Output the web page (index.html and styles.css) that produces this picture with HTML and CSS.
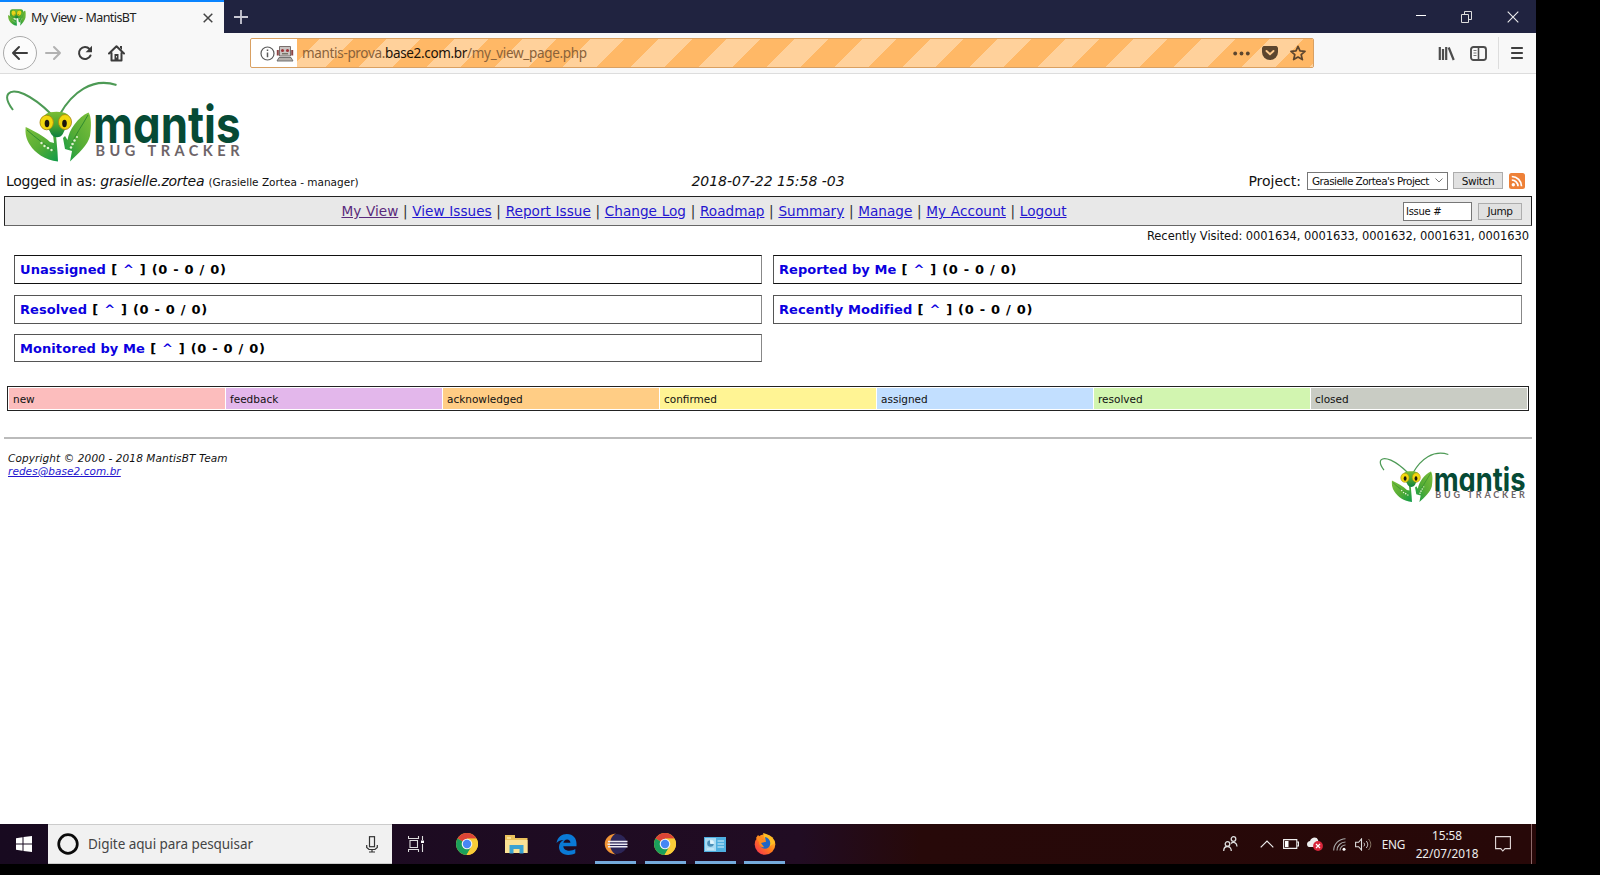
FILE: index.html
```html
<!DOCTYPE html>
<html lang="en">
<head>
<meta charset="utf-8">
<title>My View - MantisBT</title>
<link rel="stylesheet" href="styles.css">
</head>
<body>
<svg class="defs" width="0" height="0">
  <defs>
    <linearGradient id="leaf" x1="0" y1="0" x2="1" y2="1"><stop offset="0" stop-color="#7cc03c"/><stop offset=".5" stop-color="#57ad35"/><stop offset="1" stop-color="#0e9a48"/></linearGradient>
    <linearGradient id="leaf2" x1="1" y1="0" x2="0" y2="1"><stop offset="0" stop-color="#7cc03c"/><stop offset=".5" stop-color="#57ad35"/><stop offset="1" stop-color="#0e9a48"/></linearGradient>
    <linearGradient id="face" x1="0" y1="0" x2="0" y2="1"><stop offset="0" stop-color="#7bbd35"/><stop offset=".5" stop-color="#4ba62f"/><stop offset="1" stop-color="#0c7f40"/></linearGradient>
    <linearGradient id="fox" x1="0" y1="1" x2="1" y2="0"><stop offset="0" stop-color="#f5265a"/><stop offset=".5" stop-color="#ff7a1a"/><stop offset="1" stop-color="#ffd92e"/></linearGradient>
    <symbol id="insect" viewBox="25 108 67 54">
      <path d="M25.700 127C34 131 44 136 50 142l4 1-1-8h3l1.500 17L58 161.500C45 160 35 153 30 145c-4-6-5-12-4.300-18z" fill="url(#leaf)"/>
      <path d="M88.500 112.500c3 4 3 14 1.500 23.500-2 9-12 18-20 25.500l2-10.500-7-2-2-11 2-2 2.500 4C69 130 78 117 88.500 112.500z" fill="url(#leaf2)"/>
      <path d="M27 130c9 8 18 15 28 21M88 115c-6 11-13 20-17 30" fill="none" stroke="#2f8a2e" stroke-width="1"/>
      <path d="M46 114c4-3 17-3 21 0 4 4 4 10 0 14-3 1-3 5-5 7-2 3-8 3-10 0-2-2-2-6-6-7-5-4-4-10 0-14z" fill="url(#face)"/>
      <ellipse cx="46.700" cy="122.500" rx="6.700" ry="7.300" fill="#f1d80f" stroke="#a98a12" stroke-width=".9"/>
      <ellipse cx="65" cy="122" rx="6.500" ry="7.500" fill="#f1d80f" stroke="#a98a12" stroke-width=".9"/>
      <ellipse cx="47" cy="123.500" rx="2.300" ry="3.700" fill="#1b160c"/><ellipse cx="64.500" cy="123.500" rx="2.300" ry="3.700" fill="#1b160c"/>
      <g fill="#e3f3d2"><circle cx="41.500" cy="143" r="1.200"/><circle cx="44.500" cy="146" r="1.200"/><circle cx="48" cy="148" r="1.300"/><circle cx="51.500" cy="150" r="1.200"/><circle cx="77" cy="137" r="1"/><circle cx="74.500" cy="140.500" r="1.200"/><circle cx="72.500" cy="144" r="1.300"/><circle cx="71" cy="147.500" r="1.200"/></g>
    </symbol>
    <symbol id="logo" viewBox="6 81 236 82">
      <path d="M13 110C1 94 9 88 24 94c11 5 19 12 27 20" fill="none" stroke="#4d9a55" stroke-width="2"/>
      <path d="M60 114C72 93 92 77 116.500 85" fill="none" stroke="#4d9a55" stroke-width="2"/>
      <use href="#insect" x="25" y="108" width="67" height="54"/>
      <text class="word" x="93" y="143" textLength="147.500" lengthAdjust="spacingAndGlyphs">mantis</text>
      <text class="tag" x="95.500" y="155.500" textLength="144" lengthAdjust="spacing">BUG TRACKER</text>
    </symbol>
    <symbol id="chrome" viewBox="0 0 22 22">
      <circle cx="11" cy="11" r="11" fill="#efc22d"/>
      <path d="M11 11L1.500 5.500A11 11 0 0 1 20.500 5.500H11z" fill="#dc4437"/>
      <path d="M1.500 5.500A11 11 0 0 0 10.500 22L15.500 13.500 11 11z" fill="#1a9f5b"/>
      <path d="M11 5.700h9.600A11 11 0 0 1 10.500 22l5.200-8.700z" fill="#f9cc38"/>
      <circle cx="11" cy="11" r="5.300" fill="#f3f3f3"/><circle cx="11" cy="11" r="4.200" fill="#4687f4"/>
    </symbol>
  </defs>
</svg>

<div class="screen">
  <header class="titlebar">
    <div class="tab">
      <svg class="favicon" width="18" height="17" viewBox="25 108 67 54" preserveAspectRatio="none"><rect x="32" y="109" width="50" height="28" rx="8" fill="#4ba62f"/><use href="#insect" x="25" y="108" width="67" height="54"/><circle cx="45" cy="120" r="7" fill="#e6d51a"/><circle cx="68" cy="120" r="7" fill="#e6d51a"/></svg>
      <span class="tab-title">My View - MantisBT</span>
      <svg width="10" height="10" viewBox="0 0 10 10"><path d="M.7.7l8.600 8.600M9.300.7L.7 9.300" stroke="#444" stroke-width="1.500"/></svg>
    </div>
    <svg class="newtab" width="14" height="14" viewBox="0 0 14 14"><path d="M7 0v14M0 7h14" stroke="#c9c9d4" stroke-width="1.800"/></svg>
    <div class="window-buttons">
      <svg width="10" height="12" viewBox="0 0 10 12"><path d="M0 4.500h10" stroke="#fff"/></svg>
      <svg width="11" height="12" viewBox="0 0 11 12"><path d="M.5 3.500h7v8h-7zM3.500 3.500v-3h7v8h-3" fill="none" stroke="#ddd"/></svg>
      <svg width="12" height="12" viewBox="0 0 12 12"><path d="M.7.7l10.600 10.600M11.300.7L.7 11.300" stroke="#eee" stroke-width="1.100"/></svg>
    </div>
  </header>

  <nav class="toolbar">
    <span class="back"><svg width="18" height="16" viewBox="0 0 18 16"><path d="M16 8H2M8 2L2 8l6 6" fill="none" stroke="#3c3c3c" stroke-width="2" stroke-linecap="round" stroke-linejoin="round"/></svg></span>
    <svg class="fwd" width="18" height="16" viewBox="0 0 18 16"><path d="M2 8h14M10 2l6 6-6 6" fill="none" stroke="#b2b2b2" stroke-width="2" stroke-linecap="round" stroke-linejoin="round"/></svg>
    <svg class="reload" width="16" height="16" viewBox="0 0 16 16"><path d="M13.500 10.500A6 6 0 1 1 12.500 4" fill="none" stroke="#3c3c3c" stroke-width="2" stroke-linecap="round"/><path d="M15 .8v6.400H8.600z" fill="#3c3c3c"/></svg>
    <svg class="home" width="17" height="17" viewBox="0 0 17 17"><path d="M1 8.500L8.500 1.200 16 8.500M3.500 8v7.500h10V8" fill="none" stroke="#3c3c3c" stroke-width="2" stroke-linecap="round" stroke-linejoin="round"/><path d="M6.500 9h4v7h-4zM12 1h2v4l-2-2z" fill="#3c3c3c"/><path d="M8 11h1v1.500H8z" fill="#ddd"/></svg>
    <div class="urlbar">
      <div class="identity">
        <svg width="15" height="15" viewBox="0 0 15 15"><circle cx="7.500" cy="7.500" r="6.500" fill="none" stroke="#5c5c5c" stroke-width="1.200"/><path d="M7.500 6.500v4.800M7.500 3.500v1.600" stroke="#5c5c5c" stroke-width="1.500"/></svg>
        <svg width="18" height="17" viewBox="0 0 18 17"><path d="M3.500 1.500h11V11h-11z" fill="#c9c3c1" stroke="#6c6260" stroke-width=".9"/><path d="M.8 5h2v5.500h-2zM15.200 5h2v5.500h-2z" fill="#8b4444"/><circle cx="6.500" cy="5.500" r="1.500" fill="#a03338"/><circle cx="11.500" cy="5.500" r="1.500" fill="#a03338"/><path d="M6 8.800h6" stroke="#554" /><path d="M3 12.500h12l2 3.500H1z" fill="#b5b0ac" stroke="#666" stroke-width=".9"/></svg>
      </div>
      <div class="address"><span class="url">mantis-prova.<b>base2.com.br</b>/my_view_page.php</span>
        <svg class="dots" width="17" height="5" viewBox="0 0 17 5"><circle cx="2.200" cy="2.500" r="1.900"/><circle cx="8.500" cy="2.500" r="1.900"/><circle cx="14.800" cy="2.500" r="1.900"/></svg>
        <svg class="pocket" width="16" height="14" viewBox="0 0 16 14"><path d="M1.500 0h13L16 1.500V6A8 8 0 0 1 0 6V1.500z" fill="#5c452e"/><path d="M4.500 5L8 8.300 11.500 5" fill="none" stroke="#fdc98c" stroke-width="1.900" stroke-linecap="round"/></svg>
        <svg class="star" width="16" height="16" viewBox="0 0 16 16"><path d="M8 1.300l2 4.600 5 .5-3.800 3.300 1.200 4.900L8 12l-4.400 2.600 1.200-4.900L1 6.400l5-.5z" fill="none" stroke="#5c452e" stroke-width="1.700" stroke-linejoin="round"/></svg>
      </div>
    </div>
    <div class="tools">
      <svg width="17" height="15" viewBox="0 0 17 15"><path d="M1.800 1v13M5 3v11M8.200 1v13M10.700 1.500l5 12.500" stroke="#4d4d4d" stroke-width="2.200"/></svg>
      <svg width="17" height="15" viewBox="0 0 17 15"><rect x="1" y="1" width="15" height="13" rx="2.500" fill="none" stroke="#4d4d4d" stroke-width="1.900"/><path d="M8.500 1v13" stroke="#4d4d4d" stroke-width="1.600"/><path d="M3.500 4.500h3M3.500 7h3M3.500 9.500h3" stroke="#777"/></svg>
      <span class="divider"></span>
      <svg width="12" height="14" viewBox="0 0 12 14"><path d="M.8 2h10.400M.8 7h10.400M.8 12h10.400" stroke="#3f3f3f" stroke-width="1.900" stroke-linecap="round"/></svg>
    </div>
  </nav>

  <main class="page">
    <svg class="logo" width="236" height="82"><use href="#logo"/></svg>
    <div class="login">
      <div class="user">Logged in as: <i>grasielle.zortea</i> <small>(Grasielle Zortea - manager)</small></div>
      <div class="clock">2018-07-22 15:58 -03</div>
      <div class="project"><span>Project:</span>
        <div class="select"><span>Grasielle Zortea's Project</span><svg width="8" height="5" viewBox="0 0 8 5"><path d="M.5.5L4 4 7.500.5" fill="none" stroke="#777"/></svg></div>
        <button class="btn switch">Switch</button>
        <svg class="rss" width="16" height="16" viewBox="0 0 16 16"><rect width="16" height="16" rx="2.500" fill="#ee8138"/><circle cx="4.300" cy="11.800" r="1.700" fill="#fff"/><path d="M2.800 7a6.200 6.200 0 0 1 6.200 6.200M2.800 3.500a9.700 9.700 0 0 1 9.700 9.700" fill="none" stroke="#fff" stroke-width="1.700"/></svg>
      </div>
    </div>
    <div class="menu">
      <div class="links"><a class="visited">My View</a> | <a>View Issues</a> | <a>Report Issue</a> | <a>Change Log</a> | <a>Roadmap</a> | <a>Summary</a> | <a>Manage</a> | <a>My Account</a> | <a>Logout</a></div>
      <div class="jump"><div class="issue">Issue #</div><button class="btn">Jump</button></div>
    </div>
    <div class="recent"><span>Recently Visited: 0001634, 0001633, 0001632, 0001631, 0001630</span></div>
    <div class="boxes">
      <section class="box dark"><span><a class="name">Unassigned</a> [ <a>^</a> ] (0 - 0 / 0)</span></section>
      <section class="box dark"><span><a class="name">Reported by Me</a> [ <a>^</a> ] (0 - 0 / 0)</span></section>
      <section class="box"><span><a class="name">Resolved</a> [ <a>^</a> ] (0 - 0 / 0)</span></section>
      <section class="box"><span><a class="name">Recently Modified</a> [ <a>^</a> ] (0 - 0 / 0)</span></section>
      <section class="box"><span><a class="name">Monitored by Me</a> [ <a>^</a> ] (0 - 0 / 0)</span></section>
    </div>
    <div class="legend">
      <div class="new">new</div><div class="feedback">feedback</div><div class="acknowledged">acknowledged</div><div class="confirmed">confirmed</div><div class="assigned">assigned</div><div class="resolved">resolved</div><div class="closed">closed</div>
    </div>
    <hr>
    <footer class="foot">
      <address>Copyright © 2000 - 2018 MantisBT Team<br><a>redes@base2.com.br</a></address>
      <svg class="small-logo" width="148" height="51"><use href="#logo"/></svg>
    </footer>
  </main>

  <div class="taskbar">
    <div class="start"><svg width="16" height="16" viewBox="0 0 16 16"><path d="M0 2.200L6.500 1.300V7.500H0zM7.500 1.100L16 0v7.500H7.500zM0 8.500h6.500v6.200L0 13.800zM7.500 8.500H16V16l-8.500-1.100z" fill="#fff"/></svg></div>
    <div class="search"><svg width="22" height="22" viewBox="0 0 22 22"><circle cx="11" cy="11" r="9.300" fill="none" stroke="#0b0b0b" stroke-width="2.700"/></svg><span>Digite aqui para pesquisar</span>
      <svg class="mic" width="12" height="17" viewBox="0 0 12 17"><rect x="3.500" y=".7" width="5" height="10" fill="none" stroke="#333" stroke-width="1.200"/><path d="M.7 9v2.500L3 13.500h6l2.300-2V9M6 13.500V16M3 16h6" fill="none" stroke="#333" stroke-width="1.200"/></svg>
    </div>
    <div class="apps">
      <div class="app"><svg width="17" height="16" viewBox="0 0 17 16"><path d="M.5 0v2.500h10V0M.5 16v-2.500h10V16M2 4.500h7.500v7H2zM14.500 0v4M14.500 8v8" fill="none" stroke="#ddd" stroke-width="1.100"/><path d="M13 4.500h3v2.500h-3z" fill="#fff"/></svg></div>
      <div class="app"><svg width="22" height="22"><use href="#chrome"/></svg></div>
      <div class="app"><svg width="23" height="20" viewBox="0 0 23 20"><path d="M0 1h10v3h12.500v15H0z" fill="#ecc25c"/><path d="M2 3h4v2H2zM0 6h22.500v13H0z" fill="#fbe295"/><path d="M4.500 19.500V11h14v8.500h-4V15h-6v4.500z" fill="#3aa2d2"/></svg></div>
      <div class="app"><svg width="21" height="21" viewBox="0 0 21 21"><path d="M.5 9C1.500 3 6 0 10.800 0c6.500 0 9.700 4.500 9.700 9.500v2.800H7.300c.2 3 3 4.500 6 4.500 2.300 0 4.300-.6 6-1.700v4.200C17.500 20.400 15 21 12.300 21 6 21 3 17.300 3 13c0-3.200 1.800-5.700 4.500-7C4.800 6 2 7.300.5 9zm6.900-.3h7c0-2-1.200-3.300-3.300-3.300-2 0-3.300 1.300-3.700 3.300z" fill="#0a7ad6"/></svg></div>
      <div class="app on"><svg width="24" height="22" viewBox="0 0 24 22"><circle cx="13" cy="11" r="10" fill="#2c2557"/><path d="M12 .5C-3 2-3 20 12 21.500 4 18 4 4 12 .5z" fill="#f09436"/><path d="M4 8.500h19.500M3.500 11.200h20M4 13.800h19.500" stroke="#eceaf4" stroke-width="1.500"/></svg></div>
      <div class="app on"><svg width="22" height="22"><use href="#chrome"/></svg></div>
      <div class="app on"><svg width="22" height="15" viewBox="0 0 22 15"><path d="M0 0h22v15H0z" fill="#4eafe0"/><path d="M1 1h11v13H1z" fill="#a8daf2"/><circle cx="6.500" cy="6.500" r="3.300" fill="#4b8fb8"/><path d="M6.500 6.500V3a3.500 3.500 0 0 1 3.500 3.500zM3 12h7M13.500 4H20M13.500 7H20M13.500 10H20" fill="#e4f6fd" stroke="#d6f0fb"/></svg></div>
      <div class="app on"><svg width="22" height="22" viewBox="0 0 22 22"><circle cx="11" cy="11.500" r="10.300" fill="url(#fox)"/><path d="M9 0c5 1 10 5 12 10l-5 3-5-7z" fill="#ffbd24"/><path d="M11 4c4 1 6 4 5 8-1 4-6 5-9 2-2-3-1-7 1-8l1 3h3z" fill="#2165c4"/><path d="M2 5l2-3 4 4 3 3-4 1 3 4c-3 1-5-2-5-5z" fill="#ff8a1f"/></svg></div>
    </div>
    <div class="tray">
      <svg class="people" width="15" height="16" viewBox="0 0 15 16"><g fill="none" stroke="#ddd" stroke-width="1.300"><circle cx="4.500" cy="8" r="2.300"/><path d="M.7 15c0-6 7.600-6 7.600 0"/><circle cx="10.500" cy="3" r="2.300"/><path d="M8 7.500c2-2.500 6-1 6 3"/></g></svg>
      <svg class="chev" width="14" height="8" viewBox="0 0 14 8"><path d="M.7 7.300L7 1l6.300 6.300" fill="none" stroke="#eee" stroke-width="1.200"/></svg>
      <svg class="batt" width="16" height="10" viewBox="0 0 16 10"><path d="M.6.6h13.200v8.800H.6zM14 3h1.500v4H14" fill="none" stroke="#eee" stroke-width="1.100"/><path d="M2 2h3.500v6H2z" fill="#fff"/></svg>
      <svg class="cloud" width="16" height="14" viewBox="0 0 16 14"><path d="M0 7c0-2 2-3 3-3 1-4 7-5 8-1l2 7H2C1 10 0 9 0 7z" fill="#eee"/><circle cx="11" cy="9" r="4.900" fill="#d9263b"/><path d="M9 7l4 4M13 7l-4 4" stroke="#fff" stroke-width="1.200"/></svg>
      <svg class="wifi" width="13" height="13" viewBox="0 0 13 13"><g fill="none" stroke="#aaa" stroke-width="1.100"><path d="M.7 12.500A12 12 0 0 1 12.500.7M4 12.500A8.500 8.500 0 0 1 12.500 4M7 12.500A5.500 5.500 0 0 1 12.500 7"/></g><circle cx="11" cy="11.300" r="1.500" fill="#fff"/></svg>
      <svg class="vol" width="17" height="13" viewBox="0 0 17 13"><path d="M.6 4.300h3L6.500 1v11L3.600 8.700h-3z" fill="none" stroke="#ddd" stroke-width="1.100"/><path d="M8.800 4.800c1 1.200 1 2.400 0 3.500M11.200 3c2 2.200 2 4.800 0 7" fill="none" stroke="#ddd"/><path d="M13.500 1c3 3.500 3 7.500 0 11" fill="none" stroke="#876"/></svg>
      <span class="lang">ENG</span>
      <div class="time"><span>15:58</span><span>22/07/2018</span></div>
      <svg class="note" width="16" height="16" viewBox="0 0 16 16"><path d="M.6.6h14.800v12H10L7.800 15 5.800 12.600H.6z" fill="none" stroke="#e4dada" stroke-width="1.100"/></svg>
      <span class="peek"></span>
    </div>
  </div>
</div>
</body>
</html>
```
FILE: styles.css
```css
* { box-sizing: border-box; }
body { margin: 0; background: #000; height: 875px; overflow: hidden; font-family: "DejaVu Sans", sans-serif; color: #111; }
svg { display: block; flex: none; }
.defs { position: absolute; }
.screen { width: 1536px; height: 864px; display: flex; flex-direction: column; background: #fff; }
span, a, div, small { white-space: nowrap; }

.titlebar { height: 33px; background: #202340; display: flex; align-items: center; }
.tab { width: 224px; height: 33px; background: #f8f8f8; border-top: 2px solid #0a84ff; display: flex; align-items: center; padding: 0 11px 0 8px; }
.tab-title { flex: 1; margin-left: 5px; font: 12.500px "Noto Sans", sans-serif; letter-spacing: -.58px; word-spacing: .5px; color: #222; }
.newtab { margin-left: 10px; }
.window-buttons { margin-left: auto; display: flex; align-items: center; gap: 35px; padding-right: 17px; }

.toolbar { height: 41px; background: #f8f8f8; border-bottom: 1px solid #ddd; display: flex; align-items: center; padding-left: 3px; }
.back { width: 34px; height: 34px; border: 1px solid #aaa; border-radius: 50%; display: flex; align-items: center; justify-content: center; background: #fcfcfc; }
.fwd { margin-left: 7px; }
.reload { margin-left: 15px; }
.home { margin-left: 15px; }
.urlbar { margin-left: 125px; width: 1064px; height: 30px; border: 1px solid #d9a062; border-radius: 2px; display: flex; overflow: hidden; background: #fff; }
.identity { width: 46px; display: flex; align-items: center; gap: 1px; padding-left: 9px; }
.address { flex: 1; display: flex; align-items: center; padding: 0 7px 0 5px; background: repeating-linear-gradient(135deg, #ffb866 0, #ffb866 15.600px, #ffd19b 15.600px, #ffd19b 39.600px, #ffb866 39.600px, #ffb866 48px); }
.url { font: 13.500px "Noto Sans", sans-serif; letter-spacing: -.33px; color: #8a623a; }
.url b { font-weight: 400; color: #1c130a; }
.dots { margin-left: auto; fill: #5c452e; }
.pocket { margin-left: 12px; }
.star { margin-left: 12px; }
.tools { margin-left: auto; display: flex; align-items: center; padding-right: 13px; height: 40px; }
.tools svg + svg { margin-left: 15px; }
.divider { width: 1px; height: 32px; background: #ddd; margin: 0 12px 0 11px; }

.page { height: 750px; padding: 0 4px; display: flex; flex-direction: column; }
.logo { margin: 7px 0 0 2px; }
.word { font: 700 51.500px Inter, sans-serif; font-feature-settings: "cv11"; fill: #064a35; }
.tag { font: 700 14.500px Lato, sans-serif; fill: #6d6468; }
.login { height: 33px; display: grid; grid-template-columns: 1fr 1fr 1fr; align-items: center; padding: 2px 5px 0 2px; font-size: 14px; }
.user { letter-spacing: -.27px; }
.user small { font-size: 10.500px; letter-spacing: 0; }
.clock { padding-left: 3px; text-align: center; font-style: italic; letter-spacing: -.02px; }
.project { display: flex; align-items: center; justify-content: flex-end; padding-right: 2px; }
.select { width: 141px; height: 18px; margin-left: 6px; border: 1px solid #777; display: flex; align-items: center; justify-content: space-between; padding: 0 4px; font: 10.500px "DejaVu Sans", sans-serif; letter-spacing: -.58px; }
.btn { height: 17px; border: 1px solid #adadad; background: #e1e1e1; padding: 0; font: 10.500px "DejaVu Sans", sans-serif; letter-spacing: -.4px; width: 44px; display: flex; align-items: center; justify-content: center; color: #111; }
.switch { width: 50px; margin: 0 6px 0 5px; }
.menu { height: 30px; border: 1px solid #222; border-bottom-color: #666; background: #e8e8e8; display: grid; grid-template-columns: 1fr 128px; align-items: center; font-size: 13.600px; }
.links { text-align: center; color: #333; word-spacing: .35px; letter-spacing: .02px; }
.links a { color: #2416cf; text-decoration: underline; }
.links .visited { color: #5a2a7c; }
.jump { display: flex; align-items: center; gap: 6px; }
.issue { width: 69px; height: 19px; border: 1px solid #777; background: #fff; font-size: 10px; line-height: 18px; padding-left: 2px; letter-spacing: -.3px; }
.recent { height: 20px; margin-bottom: 9px; font-size: 11.500px; letter-spacing: -.05px; text-align: right; padding-right: 3px; line-height: 20px; }
.boxes { display: grid; grid-template-columns: 748px 749px; grid-template-rows: 29px 29px 28px; gap: 10.500px 11px; padding-left: 10px; }
.box { border: 1px solid #555; border-right-color: #888; display: flex; align-items: center; padding-left: 5px; font-size: 13px; font-weight: 700; color: #000; letter-spacing: .7px; }
.box.dark { border-color: #111 #888 #111 #555; }
.box a { color: #0b00e0; }
.box .name { letter-spacing: .07px; }
.legend { margin: 24px 3px 0; height: 25px; border: 1px solid #222; display: grid; grid-template-columns: repeat(7, 1fr); gap: 1px; padding: 1px; font-size: 10.500px; }
.legend div { padding-left: 4px; line-height: 22px; height: 21px; }
.new { background: #fcbdbd; }
.feedback { background: #e3b7eb; }
.acknowledged { background: #ffcd85; }
.confirmed { background: #fff494; }
.assigned { background: #c2dfff; }
.resolved { background: #d2f5b0; }
.closed { background: #c9ccc4; }
hr { width: 100%; height: 2px; border: 0; background: #bbb; margin: 26px 0 0; }
.foot { display: flex; justify-content: space-between; padding: 13px 5px 0 4px; }
address { font-size: 10.500px; line-height: 13.300px; letter-spacing: .11px; }
address a { color: #2416cf; text-decoration: underline; letter-spacing: .06px; }

.taskbar { height: 40px; display: flex; background: linear-gradient(90deg, #180a20 0, #210c23 52%, #270909 60%, #270808 100%); color: #eee; font-family: "Noto Sans", sans-serif; }
.start { width: 48px; display: flex; align-items: center; justify-content: center; }
.search { width: 344px; background: #f1f1f1; border-top: 1px solid #ccc; border-bottom: 1px solid #ccc; display: flex; align-items: center; padding: 0 14px 0 9px; color: #444; font-size: 13.500px; letter-spacing: -.07px; }
.search span { margin-left: 9px; }
.mic { margin-left: auto; }
.apps { display: flex; }
.app { width: 41px; margin: 0 4.370px; display: flex; align-items: center; justify-content: center; border-bottom: 3px solid transparent; border-top: 3px solid transparent; }
.app.on { border-bottom-color: #74aadb; }
.tray { margin-left: auto; display: flex; align-items: center; font-size: 11.800px; }
.chev { margin-left: 22px; }
.batt { margin-left: 9px; }
.cloud { margin-left: 8px; }
.wifi { margin-left: 10px; }
.vol { margin-left: 9px; }
.lang { margin-left: 10px; letter-spacing: -.3px; }
.time { width: 62px; margin-left: 11px; display: flex; flex-direction: column; align-items: center; line-height: 18.500px; }
.note { margin-left: 17px; }
.peek { width: 1px; height: 40px; background: #8d6a6a; margin: 0 4px 0 20px; }
```
